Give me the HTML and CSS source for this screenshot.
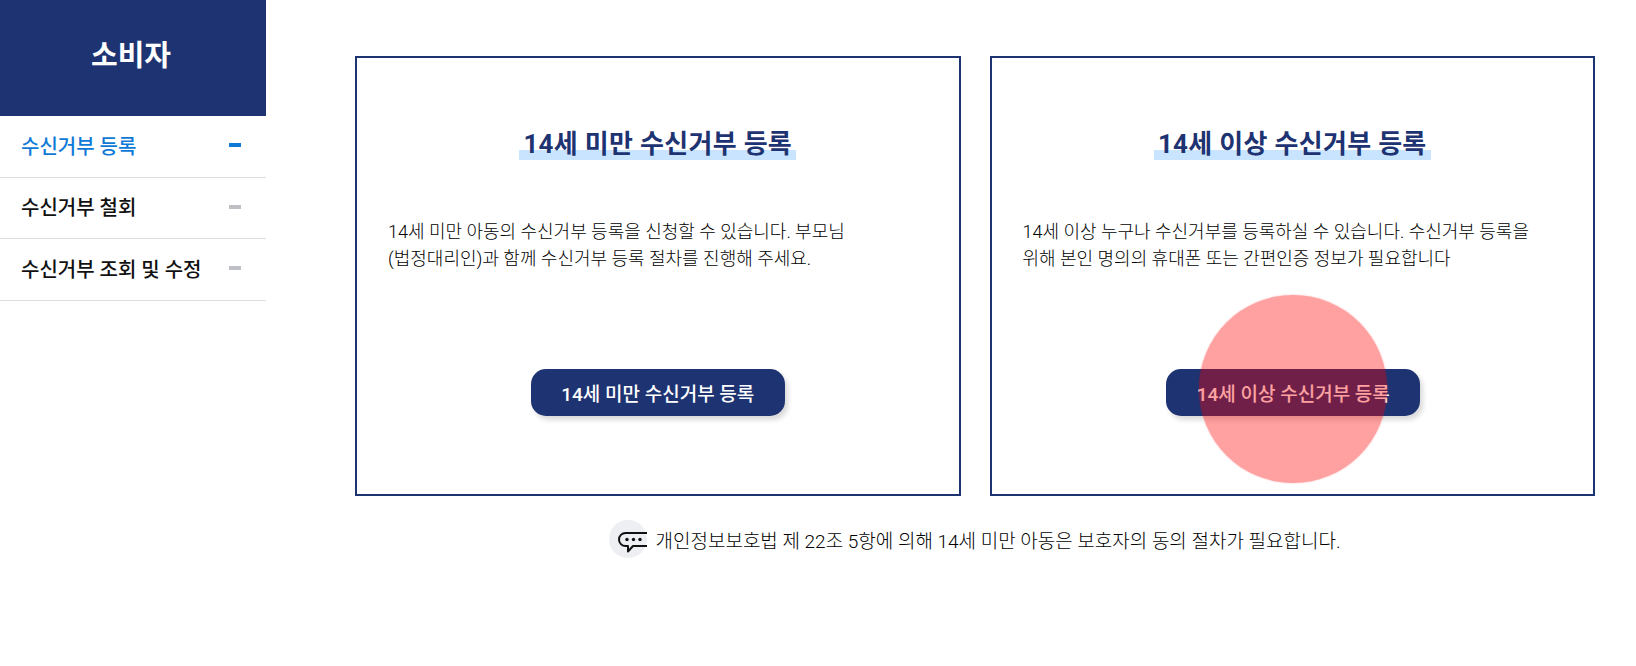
FILE: index.html
```html
<!DOCTYPE html>
<html lang="ko">
<head>
    <meta charset="UTF-8">
    <meta name="viewport" content="width=device-width, initial-scale=1.0">
    <title>수신거부 등록</title>
    <link rel="stylesheet" href="styles.css">
</head>
<body>
    <aside class="sidebar">
        <h1 class="side-title">소비자</h1>
        <ul class="side-menu">
            <li class="side-item active"><span>수신거부 등록</span><i class="dash"></i></li>
            <li class="side-item"><span>수신거부 철회</span><i class="dash"></i></li>
            <li class="side-item"><span>수신거부 조회 및 수정</span><i class="dash"></i></li>
        </ul>
    </aside>

    <main class="content">
        <div class="cards">
            <section class="card">
                <h2 class="card-title"><span>14세 미만 수신거부 등록</span></h2>
                <p class="card-text">14세 미만 아동의 수신거부 등록을 신청할 수 있습니다. 부모님<br>(법정대리인)과 함께 수신거부 등록 절차를 진행해 주세요.</p>
                <button class="card-button">14세 미만 수신거부 등록</button>
            </section>
            <section class="card">
                <h2 class="card-title"><span>14세 이상 수신거부 등록</span></h2>
                <p class="card-text">14세 이상 누구나 수신거부를 등록하실 수 있습니다. 수신거부 등록을<br>위해 본인 명의의 휴대폰 또는 간편인증 정보가 필요합니다</p>
                <button class="card-button">14세 이상 수신거부 등록</button>
                <div class="click-mark"></div>
            </section>
        </div>

        <p class="note">
            <span class="note-icon">
                <svg width="29" height="21" viewBox="0 0 29 21" fill="none">
                    <path d="M29 1H7.500a6.500 6.500 0 0 0 0 13H10v5.500L15 14h14" stroke="#111" stroke-width="2" stroke-linejoin="round"/>
                    <circle cx="9" cy="7.500" r="1.700" fill="#111"/>
                    <circle cx="15.500" cy="7.500" r="1.700" fill="#111"/>
                    <circle cx="22" cy="7.500" r="1.700" fill="#111"/>
                </svg>
            </span>
            개인정보보호법 제 22조 5항에 의해 14세 미만 아동은 보호자의 동의 절차가 필요합니다.
        </p>
    </main>
</body>
</html>
```

FILE: styles.css
```css
* {
  box-sizing: border-box;
  margin: 0;
  padding: 0;
}

html, body {
  height: 100%;
  overflow: hidden;
}

body {
  display: flex;
  background-color: #fff;
  color: #000;
  font-family: Roboto, "Noto Sans CJK KR", sans-serif;
}

.sidebar {
  width: 266px;
  flex-shrink: 0;
}

.side-title {
  height: 116px;
  padding: 0 4px 10px 0;
  display: flex;
  align-items: center;
  justify-content: center;
  background-color: #1e3372;
  color: #fff;
  font-size: 29px;
  font-weight: 700;
}

.side-menu {
  list-style: none;
}

.side-item {
  height: 61.500px;
  padding: 0 25px 2px 21px;
  display: flex;
  align-items: center;
  justify-content: space-between;
  border-bottom: 1px solid #ddd;
  color: #111;
  font-size: 20px;
  font-weight: 500;
}

.dash {
  width: 12px;
  height: 4px;
  background-color: #bfc0c6;
}

.side-item.active {
  color: #0f7ad6;
}

.side-item.active .dash {
  background-color: #0f7ad6;
}

.content {
  padding: 56px 41px 0 89px;
  flex: 1;
}

.cards {
  display: flex;
  gap: 29px;
}

.card {
  position: relative;
  flex: 1;
  height: 440px;
  padding: 70px 31px 0;
  display: flex;
  flex-direction: column;
  border: 2px solid #1e3372;
}

.card-title {
  text-align: center;
  color: #1e3372;
  font-size: 26px;
  font-weight: 700;
  letter-spacing: 0.300px;
  line-height: 32px;
}

.card-title span {
  display: inline-block;
  padding: 0 4px;
  background: linear-gradient(#c9e4ff, #c9e4ff) no-repeat left bottom / 100% 10px;
}

.card-text {
  margin-top: 58px;
  font-size: 18px;
  font-weight: 300;
  line-height: 27px;
  color: #000;
}

.card-button {
  align-self: center;
  width: 254px;
  height: 47px;
  margin-top: 97px;
  border: none;
  border-radius: 15px;
  background-color: #1e3372;
  box-shadow: 3px 4px 5px rgba(0, 0, 0, 0.15);
  color: #fff;
  font-family: inherit;
  font-size: 19px;
  font-weight: 500;
}

.card:last-child .card-button {
  transform: translateX(1px);
}

.click-mark {
  position: absolute;
  left: 207px;
  top: 237px;
  width: 188px;
  height: 188px;
  border-radius: 50%;
  background-color: rgba(255, 0, 0, 0.37);
  box-shadow: 0 0 2px rgba(255, 0, 0, 0.3);
}

.note {
  margin-top: 24px;
  display: flex;
  align-items: center;
  justify-content: center;
  font-size: 19px;
  font-weight: 300;
  color: #000;
}

.note-icon {
  position: relative;
  width: 38px;
  height: 38px;
  margin-right: 8px;
  border-radius: 50%;
  background-color: #eeeff3;
}

.note-icon svg {
  position: absolute;
  left: 9px;
  top: 12px;
}
```
